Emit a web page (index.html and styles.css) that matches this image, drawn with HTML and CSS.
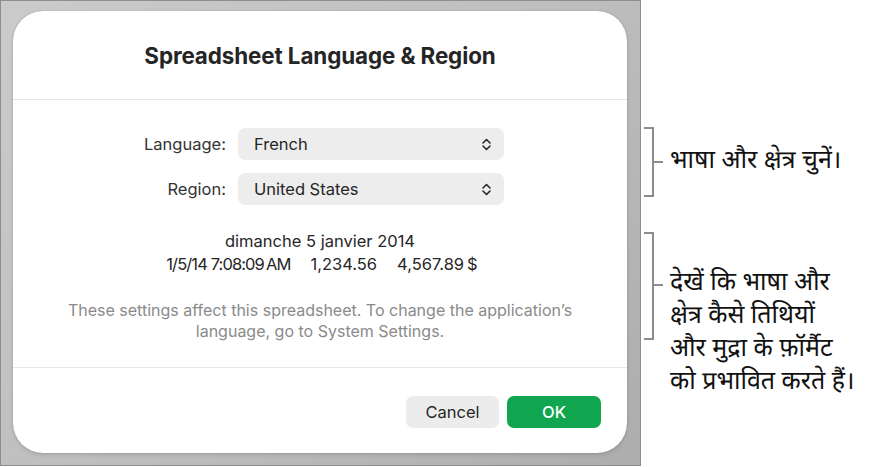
FILE: index.html
```html
<!DOCTYPE html>
<html lang="en">
<head>
<meta charset="utf-8">
<title>Spreadsheet Language &amp; Region</title>
<link rel="stylesheet" href="styles.css">
</head>
<body>
<div class="page">
  <div class="frame">
    <div class="dialog">
      <div class="header">
        <h1 class="title">Spreadsheet Language &amp; Region</h1>
      </div>
      <div class="sep"></div>
      <div class="body">
        <div class="form">
          <div class="label">Language:</div>
          <div class="select">
            <span>French</span>
            <svg class="chev" width="9" height="13" viewBox="0 0 9 13"><path d="M1 5 L4.5 1.5 L8 5 M1 8 L4.5 11.5 L8 8" fill="none" stroke="#2a2a2a" stroke-width="1.6" stroke-linecap="round" stroke-linejoin="round"/></svg>
          </div>
          <div class="label">Region:</div>
          <div class="select">
            <span>United States</span>
            <svg class="chev" width="9" height="13" viewBox="0 0 9 13"><path d="M1 5 L4.5 1.5 L8 5 M1 8 L4.5 11.5 L8 8" fill="none" stroke="#2a2a2a" stroke-width="1.6" stroke-linecap="round" stroke-linejoin="round"/></svg>
          </div>
        </div>
        <div class="preview">
          <div>dimanche 5 janvier 2014</div>
          <div class="nums"><span class="time">1/5/14 7:08:09&#8239;AM</span><span>1,234.56</span><span class="money">4,567.89&#8239;$</span></div>
        </div>
        <p class="note">These settings affect this spreadsheet. To change the application’s language, go to System Settings.</p>
      </div>
      <div class="sep"></div>
      <div class="footer">
        <button class="btn cancel">Cancel</button>
        <button class="btn ok">OK</button>
      </div>
    </div>
  </div>
  <div class="annots">
    <div class="callout c1">
      <svg class="bracket" width="20" height="70" viewBox="0 0 20 70"><path d="M0 1 H9 V69 H0 M9 35 H19" fill="none" stroke="#8c8c8c" stroke-width="2"/></svg>
      <div class="ctext">भाषा और क्षेत्र चुनें।</div>
    </div>
    <div class="callout c2">
      <svg class="bracket" width="20" height="108" viewBox="0 0 20 108"><path d="M0 1 H9 V107 H0 M9 53 H19" fill="none" stroke="#8c8c8c" stroke-width="2"/></svg>
      <div class="ctext multi">देखें कि भाषा और<br>क्षेत्र कैसे तिथियों<br>और मुद्रा के फ़ॉर्मैट<br>को प्रभावित करते हैं।</div>
    </div>
  </div>
</div>
</body>
</html>
```
FILE: styles.css
```css
html, body {
  margin: 0;
  padding: 0;
  background: #ffffff;
}
body {
  font-family: Inter, "Liberation Sans", sans-serif;
  color: #262626;
}
.page {
  display: flex;
  width: 876px;
  height: 467px;
}
.frame {
  box-sizing: border-box;
  width: 641px;
  height: 466px;
  border: 1px solid #8e8e8e;
  background: linear-gradient(135deg, #cbcbcb 0%, #bdbdbd 55%, #adadad 100%);
  padding: 10px 0 0 12px;
}
.dialog {
  width: 614px;
  height: 442px;
  background: #ffffff;
  border-radius: 30px;
  box-shadow: 0 0 1px rgba(0,0,0,0.35), 0 2px 4px rgba(0,0,0,0.12);
  display: flex;
  flex-direction: column;
}
.header {
  height: 88px;
  display: flex;
  align-items: center;
  justify-content: center;
  padding-top: 2px;
  box-sizing: border-box;
}
.title {
  margin: 0;
  font-size: 22.4px;
  font-weight: 700;
  color: #252525;
  letter-spacing: -0.1px;
  line-height: 26px;
}
.sep {
  height: 1px;
  background: #e6e6e6;
}
.body {
  height: 267px;
  padding-top: 28px;
  box-sizing: border-box;
}
.form {
  display: grid;
  grid-template-columns: 1fr 266px;
  column-gap: 12px;
  row-gap: 13px;
  padding-right: 123px;
}
.label {
  text-align: right;
  font-size: 16.5px;
  line-height: 32px;
  color: #333333;
}
.select {
  height: 32px;
  box-sizing: border-box;
  background: #ededed;
  border-radius: 7px;
  display: flex;
  align-items: center;
  justify-content: space-between;
  padding: 0 13px 0 16px;
  font-size: 16.5px;
  color: #262626;
}
.chev {
  display: block;
}
.preview {
  margin-top: 25px;
  text-align: center;
  font-size: 16.5px;
  line-height: 23px;
  color: #262626;
}
.nums {
  display: flex;
  justify-content: center;
  gap: 20px;
  padding-left: 4px;
}
.time {
  letter-spacing: -0.9px;
}
.money {
  letter-spacing: -0.3px;
}
.note {
  margin: 24px auto 0;
  width: 540px;
  text-align: center;
  font-size: 16px;
  line-height: 21px;
  color: #8a8a8a;
}
.footer {
  flex: 1;
  display: flex;
  justify-content: flex-end;
  align-items: flex-start;
  gap: 8px;
  padding: 28px 26px 0 0;
}
.btn {
  height: 32px;
  border: none;
  border-radius: 7px;
  font-family: Inter, "Liberation Sans", sans-serif;
  font-size: 16.5px;
  padding: 0;
}
.cancel {
  width: 93px;
  background: #ececec;
  color: #262626;
}
.ok {
  width: 94px;
  background: #10a64f;
  color: #ffffff;
  font-weight: 500;
}
.annots {
  flex: 1;
  display: flex;
  flex-direction: column;
  padding-left: 3px;
}
.callout {
  display: flex;
  gap: 6px;
}
.c1 {
  margin-top: 127px;
  align-items: center;
}
.c2 {
  margin-top: 35px;
  align-items: flex-start;
}
.bracket {
  display: block;
  flex: none;
}
.ctext {
  font-family: "Noto Sans Devanagari", "Lohit Devanagari", "Noto Sans", sans-serif;
  font-size: 25px;
  line-height: 33px;
  color: #111111;
  white-space: nowrap;
}
.multi {
  margin-top: 36px;
}
```
